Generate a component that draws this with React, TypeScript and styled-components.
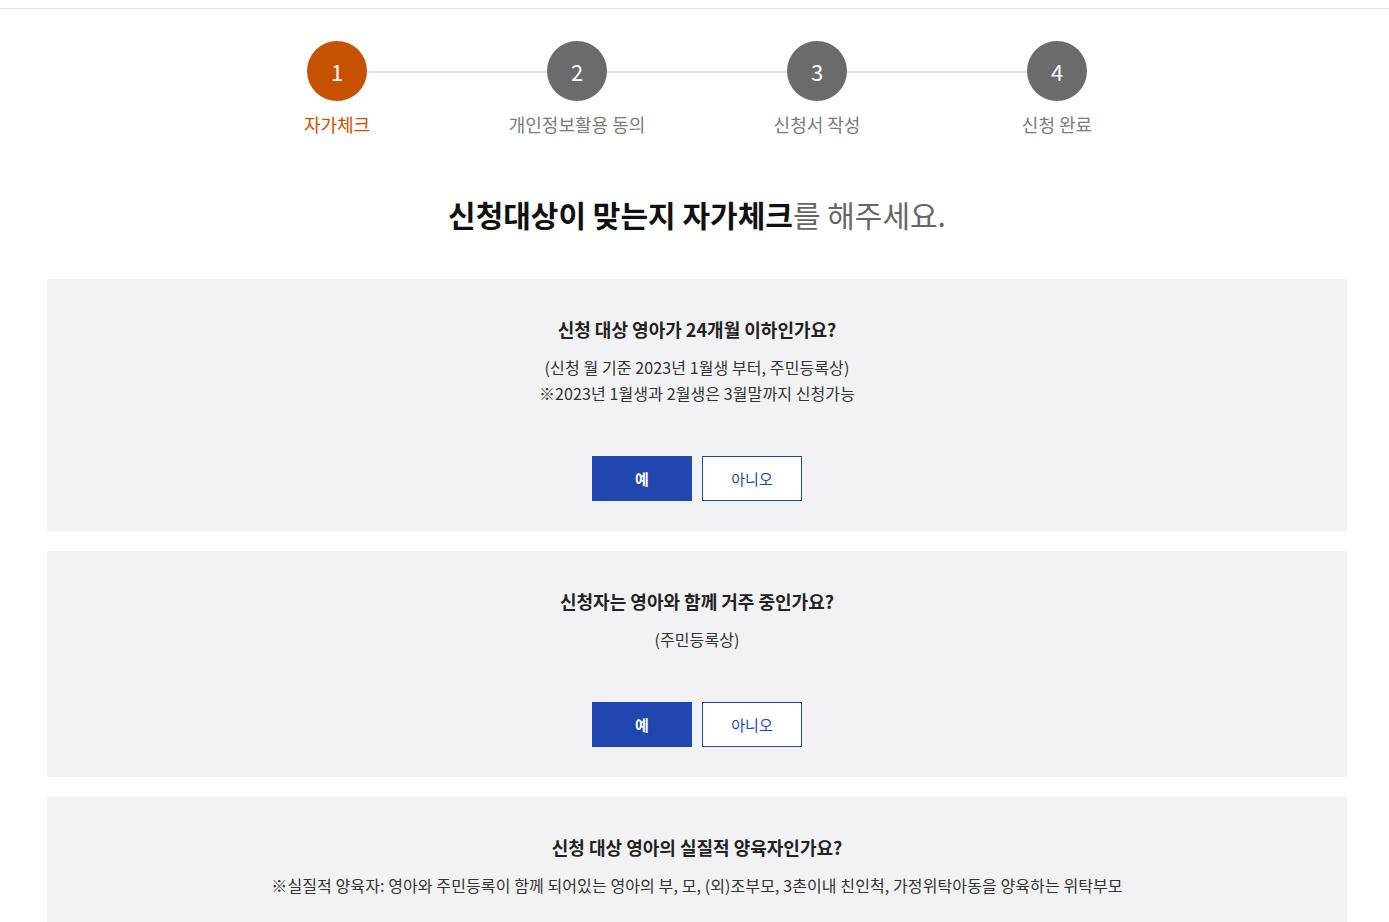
import React from 'react';
import styled, { createGlobalStyle } from 'styled-components';

const GlobalStyle = createGlobalStyle`
  html, body {
    margin: 0;
    padding: 0;
    background: #fff;
    font-family: "Noto Sans CJK KR", "Noto Sans", sans-serif;
    color: #222;
  }
  * { box-sizing: border-box; }
`;

const steps = ['자가체크', '개인정보활용 동의', '신청서 작성', '신청 완료'];

const questions = [
  {
    title: '신청 대상 영아가 24개월 이하인가요?',
    notes: ['(신청 월 기준 2023년 1월생 부터, 주민등록상)', '※2023년 1월생과 2월생은 3월말까지 신청가능'],
  },
  {
    title: '신청자는 영아와 함께 거주 중인가요?',
    notes: ['(주민등록상)'],
  },
  {
    title: '신청 대상 영아의 실질적 양육자인가요?',
    notes: ['※실질적 양육자: 영아와 주민등록이 함께 되어있는 영아의 부, 모, (외)조부모, 3촌이내 친인척, 가정위탁아동을 양육하는 위탁부모'],
  },
];

function App() {
  const current = 0;
  return (
    <>
      <GlobalStyle />
      <TopLine />
      <Page>
        <Stepper>
          {steps.map((label, i) => (
            <Step key={label} $first={i === 0} $last={i === steps.length - 1}>
              <Circle $active={i === current}>{i + 1}</Circle>
              <StepLabel $active={i === current}>{label}</StepLabel>
            </Step>
          ))}
        </Stepper>

        <Title>
          <strong>신청대상이 맞는지 자가체크</strong>를 해주세요.
        </Title>

        <Cards>
          {questions.map((q, i) => (
            <Card key={q.title}>
              <Question>{q.title}</Question>
              <Notes>
                {q.notes.map((n) => (
                  <div key={n}>{n}</div>
                ))}
              </Notes>
              {i < 2 && (
                <Buttons>
                  <ChoiceButton $primary>예</ChoiceButton>
                  <ChoiceButton>아니오</ChoiceButton>
                </Buttons>
              )}
            </Card>
          ))}
        </Cards>
      </Page>
    </>
  );
}

export default App;

const TopLine = styled.div`
  height: 9px;
  border-bottom: 1px solid #e4e4e4;
`;

const Page = styled.main`
  width: 1300px;
  margin-left: 47px;
  padding-top: 32px;
`;

const Stepper = styled.ol`
  list-style: none;
  margin: 0 auto;
  padding: 0;
  width: 960px;
  display: flex;
`;

const Step = styled.li<{ $first?: boolean; $last?: boolean }>`
  position: relative;
  width: 240px;
  display: flex;
  flex-direction: column;
  align-items: center;

  &::before {
    content: '';
    position: absolute;
    top: 30px;
    left: ${(p) => (p.$first ? '50%' : '0')};
    right: ${(p) => (p.$last ? '50%' : '0')};
    height: 2px;
    background: #e2e2e2;
  }
`;

const Circle = styled.span<{ $active?: boolean }>`
  position: relative;
  z-index: 1;
  width: 60px;
  height: 60px;
  border-radius: 50%;
  display: flex;
  align-items: center;
  justify-content: center;
  background: ${(p) => (p.$active ? '#c65100' : '#6b6b6b')};
  color: #fff;
  font-size: 22px;
  line-height: 1;
`;

const StepLabel = styled.span<{ $active?: boolean }>`
  margin-top: 10px;
  font-size: 18px;
  line-height: 26px;
  color: ${(p) => (p.$active ? '#c65100' : '#7b7b7b')};
`;

const Title = styled.h2`
  margin: 57px 0 0;
  text-align: center;
  font-size: 30px;
  line-height: 40px;
  font-weight: 400;
  color: #666;

  strong {
    font-weight: 700;
    color: #111;
  }
`;

const Cards = styled.div`
  margin-top: 45px;
  display: flex;
  flex-direction: column;
  gap: 20px;
`;

const Card = styled.section`
  background: #f2f2f4;
  padding: 37px 20px 30px;
  display: flex;
  flex-direction: column;
  align-items: center;
  text-align: center;
`;

const Question = styled.h3`
  margin: 0;
  font-size: 18px;
  line-height: 26px;
  font-weight: 700;
  color: #222;
`;

const Notes = styled.div`
  margin-top: 12px;
  font-size: 16px;
  line-height: 26px;
  color: #333;
  letter-spacing: 0.1px;
`;

const Buttons = styled.div`
  margin-top: 50px;
  display: flex;
  gap: 10px;
`;

const ChoiceButton = styled.button<{ $primary?: boolean }>`
  width: 100px;
  height: 45px;
  font-family: inherit;
  font-size: 15px;
  cursor: pointer;
  border: 1px solid #1f47ad;
  background: ${(p) => (p.$primary ? '#1f47ad' : '#fff')};
  color: ${(p) => (p.$primary ? '#fff' : '#1f47ad')};
  font-weight: ${(p) => (p.$primary ? 700 : 400)};
`;
